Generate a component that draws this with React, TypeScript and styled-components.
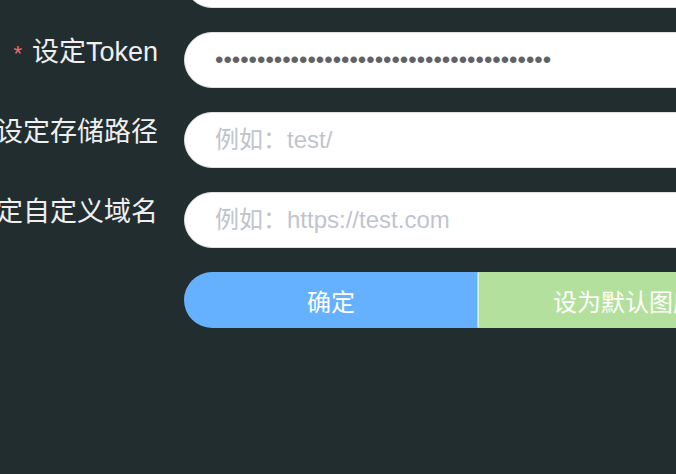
import React from "react";
import styled, { createGlobalStyle } from "styled-components";

const GlobalStyle = createGlobalStyle`
  html, body {
    margin: 0;
    padding: 0;
    background: #222d2f;
    overflow: hidden;
  }
  body {
    font-family: "Liberation Sans", "Noto Sans CJK SC", sans-serif;
  }
`;

const Page = styled.div`
  width: 676px;
  height: 474px;
  overflow: hidden;
  background: #222d2f;
`;

const Form = styled.form`
  display: flex;
  flex-direction: column;
  gap: 24px;
  margin-top: -48px;
`;

const FormItem = styled.div`
  display: flex;
  align-items: flex-start;
`;

const Label = styled.label`
  flex: 0 0 184px;
  width: 184px;
  min-width: 0;
  box-sizing: border-box;
  display: flex;
  justify-content: flex-end;
  align-items: baseline;
  padding-right: 26px;
  height: 56px;
  line-height: 40px;
  font-size: 27px;
  color: #efefef;
  white-space: nowrap;
`;

const Required = styled.span`
  color: #f56c6c;
  font-size: 22px;
  margin-right: 10px;
`;

const Input = styled.input`
  flex: 0 0 588px;
  width: 588px;
  min-width: 0;
  height: 56px;
  box-sizing: border-box;
  border: 1px solid #dcdfe6;
  border-radius: 28px;
  background: #fff;
  padding: 0 30px;
  font-family: "Liberation Sans", "Noto Sans CJK SC", sans-serif;
  font-size: 24px;
  color: #606266;
  outline: none;

  &::placeholder {
    color: #c0c4cc;
  }
`;

const ButtonGroup = styled.div`
  display: flex;
  flex: 0 0 588px;
`;

const Button = styled.button<{ $variant: "primary" | "success"; $first?: boolean }>`
  flex: 0 0 294px;
  width: 294px;
  height: 56px;
  box-sizing: border-box;
  font-family: "Liberation Sans", "Noto Sans CJK SC", sans-serif;
  font-size: 24px;
  color: #fff;
  cursor: pointer;
  padding: 0;
  white-space: nowrap;
  background: ${(p) => (p.$variant === "primary" ? "#66b1ff" : "#b3e19d")};
  border: 1px solid ${(p) => (p.$variant === "primary" ? "#66b1ff" : "#b3e19d")};
  ${(p) =>
    p.$first
      ? `border-radius: 28px 0 0 28px; border-right-color: rgba(255,255,255,0.5);`
      : `border-radius: 0 28px 28px 0; border-left-color: rgba(255,255,255,0.5);`}
`;

const Spacer = styled.div`
  flex: 0 0 184px;
`;

export default function App() {
  return (
    <Page>
      <GlobalStyle />
      <Form onSubmit={(e) => e.preventDefault()}>
        <FormItem>
          <Label>
            <Required>*</Required>设定分支名
          </Label>
          <Input defaultValue="master" placeholder="例如：master" />
        </FormItem>
        <FormItem>
          <Label>
            <Required>*</Required>设定Token
          </Label>
          <Input type="password" defaultValue="ghp_a8Kd93LmQ2xZr7Tn4WcV1bYs6PeU0hJf5GoN" />
        </FormItem>
        <FormItem>
          <Label>设定存储路径</Label>
          <Input placeholder="例如：test/" />
        </FormItem>
        <FormItem>
          <Label>设定自定义域名</Label>
          <Input placeholder="例如：https://test.com" />
        </FormItem>
        <FormItem>
          <Spacer />
          <ButtonGroup>
            <Button type="button" $variant="primary" $first>
              确定
            </Button>
            <Button type="button" $variant="success">
              设为默认图床
            </Button>
          </ButtonGroup>
        </FormItem>
      </Form>
    </Page>
  );
}
